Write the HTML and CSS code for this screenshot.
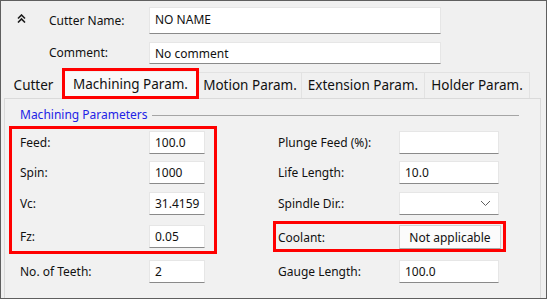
FILE: index.html
```html
<!DOCTYPE html>
<html lang="en">
<head>
  <meta charset="UTF-8">
  <title>Cutter Parameters</title>
  <link rel="stylesheet" href="styles.css">
</head>
<body>
  <div class="window">
    <div class="head">
      <span class="chevron">
        <svg width="9" height="9" viewBox="0 0 9 9"><path d="M1 4.5 L4.5 1 L8 4.5 M1 8.5 L4.5 5 L8 8.5" fill="none" stroke="#1c1c1c" stroke-width="1.6"/></svg>
      </span>
      <label class="hlabel">Cutter Name:</label>
      <div class="field tall">NO NAME</div>
      <span></span>
      <label class="hlabel">Comment:</label>
      <div class="field">No comment</div>
    </div>

    <div class="tabs">
      <div class="tab t-cutter">Cutter</div>
      <div class="tab t-mach active mark">Machining Param.</div>
      <div class="tab t-motion">Motion Param.</div>
      <div class="tab t-ext">Extension Param.</div>
      <div class="tab t-holder">Holder Param.</div>
    </div>

    <div class="page">
      <div class="legend">
        <span class="legend-title">Machining Parameters</span>
        <span class="legend-line"></span>
      </div>
      <div class="cols">
        <div class="col left">
          <div class="marked left-mark">
            <div class="row r1"><span class="lbl">Feed:</span><div class="field num">100.0</div></div>
            <div class="row r2"><span class="lbl">Spin:</span><div class="field num">1000</div></div>
            <div class="row r3"><span class="lbl">Vc:</span><div class="field num">31.4159</div></div>
            <div class="row"><span class="lbl">Fz:</span><div class="field num">0.05</div></div>
          </div>
          <div class="row teeth"><span class="lbl">No. of Teeth:</span><div class="field num">2</div></div>
        </div>
        <div class="col right">
          <div class="row r1"><span class="lbl">Plunge Feed (%):</span><div class="field wide"></div></div>
          <div class="row r2"><span class="lbl">Life Length:</span><div class="field wide">10.0</div></div>
          <div class="row r3"><span class="lbl">Spindle Dir.:</span>
            <div class="field wide combo">
              <svg width="11" height="7" viewBox="0 0 11 7"><path d="M1 1 L5.5 5.5 L10 1" fill="none" stroke="#606060" stroke-width="1"/></svg>
            </div>
          </div>
          <div class="row r4 marked coolant-mark"><span class="lbl">Coolant:</span><div class="button">Not applicable</div></div>
          <div class="row"><span class="lbl">Gauge Length:</span><div class="field wide">100.0</div></div>
        </div>
      </div>
    </div>
  </div>
</body>
</html>
```

FILE: styles.css
```css
body {
  margin: 0;
  font-family: "Noto Sans", "Open Sans", sans-serif;
  font-size: 12px;
  color: #111;
}
.window {
  width: 547px;
  height: 299px;
  box-sizing: border-box;
  border: 1px solid #5f5f5f;
  background: #f0f0f0;
  overflow: hidden;
}

/* header */
.head {
  display: grid;
  grid-template-columns: 48px 100px 292px;
  grid-template-rows: 27px 22px;
  row-gap: 8px;
  align-items: center;
  padding-top: 6px;
}
.chevron {
  padding-left: 16px;
  display: flex;
  align-self: start;
  padding-top: 7px;
}
.hlabel {
  line-height: 16px;
}

.field {
  box-sizing: border-box;
  height: 23px;
  background: #fff;
  border: 1px solid #e6e6e6;
  border-bottom-color: #8a8a8a;
  padding: 0 5px;
  display: flex;
  align-items: center;
}
.field.tall {
  height: 27px;
  align-items: flex-start;
  padding-top: 3px;
}
.head .field {
  height: 100%;
}

/* tabs */
.tabs {
  display: flex;
  margin-top: 8px;
  padding-left: 5px;
  height: 26px;
  font-size: 13.5px;
  white-space: nowrap;
}
.tab {
  flex: none;
  box-sizing: border-box;
  text-align: center;
  line-height: 25px;
  border: 1px solid #e2e2e2;
  border-bottom: none;
  border-left: none;
}
.t-cutter { width: 56px; border-color: transparent; }
.t-mach { width: 137px; }
.t-motion { width: 103px; }
.t-ext { width: 123px; }
.t-holder { width: 105px; }
.tab.active {
  background: #f9f9f9;
  border: none;
}
.mark,
.marked {
  position: relative;
}
.mark::after,
.marked::after {
  content: "";
  position: absolute;
  border: 3px solid #ff0000;
  pointer-events: none;
}
.mark::after {
  inset: -4px 0 -1px 0;
}

/* tab page */
.page {
  margin-left: 3px;
  width: 537px;
  height: 210px;
  box-sizing: border-box;
  border: 1px solid #dadada;
  background: #f1f1f1;
  padding: 5px 0 0 15px;
}
.legend {
  display: flex;
  align-items: center;
  width: 499px;
  height: 20px;
}
.legend-title {
  color: #2323e6;
  padding-right: 4px;
}
.legend-line {
  flex: 1;
  height: 0;
  border-top: 1px solid #a5a5a5;
  margin-top: 3px;
}

.cols {
  display: flex;
  margin-top: 7px;
}
.col.left {
  width: 258px;
}
.row {
  display: flex;
  align-items: center;
  height: 23px;
}
.row.r1 { margin-bottom: 7px; }
.row.r2 { margin-bottom: 8px; }
.row.r3 { margin-bottom: 10px; }
.row.r4 { margin-bottom: 11px; }
.row.teeth { margin-top: 12px; }
.lbl {
  width: 129px;
  flex: none;
}
.col.right .lbl {
  width: 121px;
}
.field.num {
  width: 56px;
}
.field.wide {
  width: 100px;
}
.field.combo {
  justify-content: flex-end;
  padding-right: 7px;
}
.button {
  flex: none;
  box-sizing: border-box;
  width: 102px;
  height: 24px;
  background: #fbfbfb;
  border: 1px solid #d0d0d0;
  border-bottom-color: #a8a8a8;
  display: flex;
  align-items: center;
  justify-content: center;
}
.left-mark::after {
  inset: -5px 61px -6px -11px;
}
.coolant-mark {
  height: 24px;
}
.coolant-mark::after {
  top: -4px;
  bottom: -3px;
  left: -5px;
  width: 233px;
  box-sizing: border-box;
}
```
